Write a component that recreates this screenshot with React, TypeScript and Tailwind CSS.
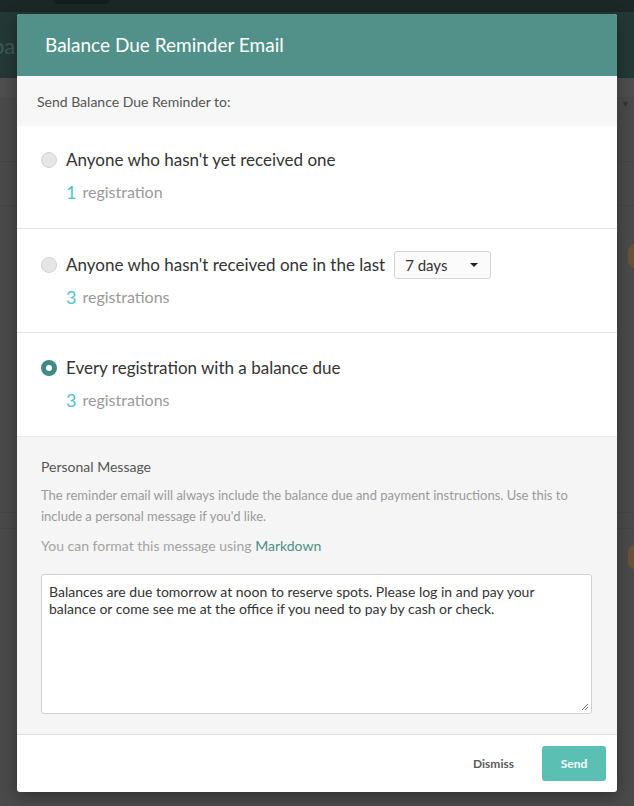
import React from "react";

function Radio({ checked }: { checked?: boolean }) {
  if (checked) {
    return (
      <span className="flex h-4 w-4 shrink-0 items-center justify-center rounded-full bg-[#3f8a84]">
        <span className="h-[6px] w-[6px] rounded-full bg-white" />
      </span>
    );
  }
  return <span className="h-4 w-4 shrink-0 rounded-full border border-[#d3d3d3] bg-[#e6e6e6]" />;
}

function Count({ n, label }: { n: number; label: string }) {
  return (
    <div className="flex h-6 items-center pl-[25px] text-[16px]">
      <span className="text-[#4cc3c9] text-[18px] mr-[6px]">{n}</span>
      <span className="text-[#9a9a9a]">{label}</span>
    </div>
  );
}

export default function App() {
  return (
    <div
      className="relative w-[634px] h-[806px] overflow-hidden bg-[#4a4a4a]"
      style={{ fontFamily: "Lato, 'Open Sans', sans-serif" }}
    >
      {/* dimmed page behind overlay */}
      <div className="h-[12px] bg-[#1b2826] flex">
        <div className="ml-[53px] w-[56px] h-[4px] rounded-b-full bg-[#14201e]" />
      </div>
      <div className="h-[66px] bg-[#243836] flex items-center overflow-hidden">
        <span className="-ml-[8px] text-[22px] text-[#3e5856]">pa</span>
      </div>
      <div className="h-[19px] bg-[#4e4e4e]" />
      <div className="flex justify-end pr-[4px] h-[20px] items-start">
        <span className="text-[9px] text-[#333]">▼</span>
      </div>
      <div className="h-[45px] border-b border-[#454545]" />
      <div className="h-[44px] border-b border-[#454545]" />
      <div className="flex justify-end mt-[38px]">
        <span className="-mr-[8px] h-[24px] w-[14px] rounded-full bg-[#6a5236]" />
      </div>
      <div className="h-[245px] border-b border-[#454545]" />
      <div className="h-[16px] border-b border-[#454545]" />
      <div className="flex justify-end mt-[16px]">
        <span className="-mr-[8px] h-[24px] w-[14px] rounded-full bg-[#6a5236]" />
      </div>

      {/* modal */}
      <div className="absolute left-[17px] top-[14px] w-[600px] overflow-hidden rounded-[3px] bg-white shadow-[0_4px_16px_rgba(0,0,0,0.35)]">
        <div className="flex h-[62px] items-center bg-[#51918a] pl-[28px] text-[19px] text-white">
          Balance Due Reminder Email
        </div>
        <div className="flex h-[50px] items-center bg-[#f7f7f7] pl-[20px] text-[14px] text-[#555]">
          Send Balance Due Reminder to:
        </div>

        <div className="border-b border-[#e4e4e4] pl-[24px] pt-[22px] pb-[24px]">
          <div className="flex h-6 items-center gap-[9px] text-[17px] text-[#333]">
            <Radio />
            <span>Anyone who hasn't yet received one</span>
          </div>
          <div className="mt-[8px]">
            <Count n={1} label="registration" />
          </div>
        </div>

        <div className="border-b border-[#e4e4e4] pl-[24px] pt-[22px] pb-[23px]">
          <div className="flex h-[28px] items-center gap-[9px] text-[17px] text-[#333]">
            <Radio />
            <span>Anyone who hasn't received one in the last</span>
            <div className="flex h-[28px] w-[97px] items-center justify-between rounded-[3px] border border-[#d6d6d6] bg-[#fbfbfb] pl-[10px] pr-[12px] text-[15px] text-[#333]">
              <span>7 days</span>
              <span className="h-0 w-0 border-x-[4px] border-t-[4px] border-x-transparent border-t-[#222]" />
            </div>
          </div>
          <div className="mt-[6px]">
            <Count n={3} label="registrations" />
          </div>
        </div>

        <div className="pl-[24px] pt-[23px] pb-[24px]">
          <div className="flex h-6 items-center gap-[9px] text-[17px] text-[#333]">
            <Radio checked />
            <span>Every registration with a balance due</span>
          </div>
          <div className="mt-[8px]">
            <Count n={3} label="registrations" />
          </div>
        </div>

        <div className="border-t border-[#ececec] border-b border-b-[#e0e0e0] bg-[#f5f5f5] px-[24px] pt-[20px] pb-[20px]">
          <div className="text-[14px] leading-[20px] text-[#555]">Personal Message</div>
          <div className="mt-[8px] text-[13px] leading-[21px] text-[#9a9a9a]">
            The reminder email will always include the balance due and payment instructions. Use this to
            include a personal message if you'd like.
          </div>
          <div className="mt-[9px] text-[14px] leading-[20px] text-[#a3a3a3]">
            You can format this message using <span className="text-[#4e8e88]">Markdown</span>
          </div>
          <div className="relative mt-[18px] h-[140px] w-[551px] rounded-[3px] border border-[#d0d0d0] bg-white px-[7px] pt-[8px] text-[14px] leading-[17px] text-[#333]">
            Balances are due tomorrow at noon to reserve spots. Please log in and pay your balance or come see me at the office if you need to pay by cash or check.
            <svg className="absolute bottom-[2px] right-[2px]" width="8" height="8" viewBox="0 0 8 8">
              <path d="M1 7 L7 1 M4 7 L7 4" stroke="#777" strokeWidth="1" />
            </svg>
          </div>
        </div>

        <div className="flex h-[57px] items-center justify-end pr-[11px]">
          <span className="mr-[28px] text-[12px] font-bold text-[#5a5a5a]">Dismiss</span>
          <button className="h-[35px] w-[64px] rounded-[3px] bg-[#5cbfb4] text-[12px] font-bold text-white">
            Send
          </button>
        </div>
      </div>
    </div>
  );
}
